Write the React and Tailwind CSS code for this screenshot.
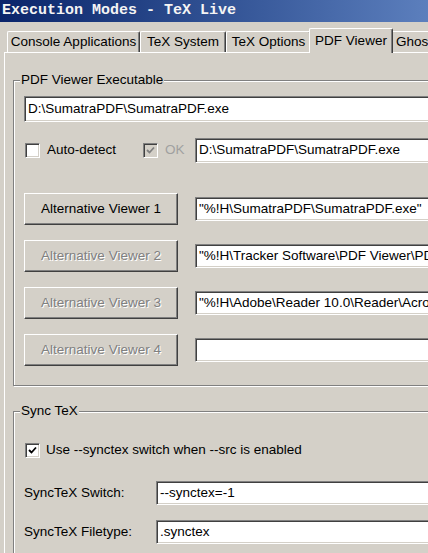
import React from 'react';

const TABS = [
  { label: 'Console Applications', w: 'w-[133px]' },
  { label: 'TeX System', w: 'w-[86px]' },
  { label: 'TeX Options', w: 'w-[85px]' },
  { label: 'PDF Viewer', w: 'w-[84px]', active: true },
  { label: 'Ghostscript', w: 'w-[90px]', left: true },
];

const VIEWERS = [
  { label: 'Alternative Viewer 1', path: '"%!H\\SumatraPDF\\SumatraPDF.exe"', enabled: true },
  { label: 'Alternative Viewer 2', path: '"%!H\\Tracker Software\\PDF Viewer\\PDFXCview.exe"' },
  { label: 'Alternative Viewer 3', path: '"%!H\\Adobe\\Reader 10.0\\Reader\\AcroRd32.exe"' },
  { label: 'Alternative Viewer 4', path: '' },
];

function Field({ value, h = 'h-[24px]', className = '' }) {
  return (
    <div
      className={`${h} ${className} bg-white border border-t-[#808080] border-l-[#808080] border-b-white border-r-white shadow-[inset_1px_1px_0_#404040,inset_-1px_-1px_0_#d4d0c8] flex items-center pl-[3px] whitespace-nowrap overflow-hidden text-black`}
    >
      {value}
    </div>
  );
}

function Check({ checked, disabled }) {
  return (
    <div
      className={`w-[15px] h-[15px] shrink-0 border border-t-[#808080] border-l-[#808080] border-b-white border-r-white shadow-[inset_1px_1px_0_#404040,inset_-1px_-1px_0_#d4d0c8] flex items-center justify-center ${
        disabled ? 'bg-[#d4d0c8]' : 'bg-white'
      }`}
    >
      {checked && (
        <svg width="9" height="9" viewBox="0 0 9 9">
          <path d="M1 4 L3.5 6.5 L8 1.5" fill="none" stroke={disabled ? '#808080' : '#000'} strokeWidth="1.8" />
        </svg>
      )}
    </div>
  );
}

function Group({ title, className = '', children }) {
  return (
    <div
      className={`relative ml-[8px] border border-[#808080] shadow-[inset_1px_1px_0_#fff,1px_1px_0_#fff] ${className}`}
    >
      {/* caption sits on the etched line */}
      <span className="absolute -top-[9px] left-[6px] px-[1px] bg-[#d4d0c8] leading-[16px] text-black">
        {title}
      </span>
      {children}
    </div>
  );
}

export default function App() {
  return (
    <div className="w-[428px] h-[553px] overflow-hidden bg-[#d4d0c8] flex flex-col font-['Liberation_Sans',Arial,sans-serif] text-[13.5px]">
      {/* Title bar */}
      <div className="h-[22px] shrink-0 bg-gradient-to-r from-[#0a246a] to-[#5c7fbd] flex items-center pl-[2px]">
        <span className="font-['Liberation_Mono',monospace] font-bold text-[15px] text-[#f4f4f4] whitespace-nowrap">
          Execution Modes - TeX Live
        </span>
      </div>

      {/* Tabs */}
      <div className="h-[30px] shrink-0 flex items-end pl-[7px] whitespace-nowrap">
        {TABS.map((t) =>
          t.active ? (
            <div
              key={t.label}
              className={`${t.w} shrink-0 -ml-[2px] -mr-[2px] h-[25px] -mb-px relative z-10 bg-[#d4d0c8] border-l border-t border-white rounded-tl-[2px] rounded-tr-[2px] border-r border-r-[#404040] shadow-[inset_-1px_0_0_#808080] flex items-start justify-center pt-[2px] text-black`}
            >
              {t.label}
            </div>
          ) : (
            <div
              key={t.label}
              className={`${t.w} shrink-0 h-[21px] border-l border-t border-white rounded-tl-[2px] rounded-tr-[2px] border-r border-r-[#404040] shadow-[inset_-1px_0_0_#808080] flex items-center text-black ${
                t.left ? 'justify-start pl-[4px]' : 'justify-center'
              }`}
            >
              {t.label}
            </div>
          )
        )}
      </div>

      {/* Panel */}
      <div className="flex-1 ml-[4px] w-[520px] border-l border-t border-white">
        <Group title="PDF Viewer Executable" className="mt-[27px] pl-[10px] pt-[15px] pb-[19px] pr-[10px]">
          <Field value="D:\SumatraPDF\SumatraPDF.exe" h="h-[26px]" />

          <div className="flex items-center mt-[16px]">
            <div className="ml-[1px]">
              <Check />
            </div>
            <span className="ml-[7px] w-[96px] text-black">Auto-detect</span>
            <Check checked disabled />
            <span className="ml-[7px] w-[30px] text-[#a0a0a0]">OK</span>
            <Field value="D:\SumatraPDF\SumatraPDF.exe" h="h-[25px]" className="flex-1" />
          </div>

          <div className="flex flex-col gap-[15px] mt-[30px]">
            {VIEWERS.map((v) => (
              <div key={v.label} className="flex items-center">
                <div className="w-[154px] h-[32px] shrink-0 border border-t-white border-l-white border-b-[#404040] border-r-[#404040] shadow-[inset_-1px_-1px_0_#808080] flex items-center justify-center">
                  {v.enabled ? (
                    <span className="text-black">{v.label}</span>
                  ) : (
                    <span className="text-[#808080] [text-shadow:1px_1px_0_#fff]">{v.label}</span>
                  )}
                </div>
                <Field value={v.path} h="h-[24px]" className="flex-1 ml-[17px]" />
              </div>
            ))}
          </div>
        </Group>

        <Group title="Sync TeX" className="mt-[25px] pl-[10px] pt-[28px] pb-[20px] pr-[10px]">
          <div className="flex items-center">
            <div className="ml-[1px]">
              <Check checked />
            </div>
            <span className="ml-[6px] text-black whitespace-nowrap">Use --synctex switch when --src is enabled</span>
          </div>

          <div className="flex items-center mt-[21px]">
            <span className="w-[132px] shrink-0 text-black">SyncTeX Switch:</span>
            <Field value="--synctex=-1" h="h-[24px]" className="flex-1" />
          </div>
          <div className="flex items-center mt-[15px]">
            <span className="w-[132px] shrink-0 text-black">SyncTeX Filetype:</span>
            <Field value=".synctex" h="h-[24px]" className="flex-1" />
          </div>
        </Group>
      </div>
    </div>
  );
}
